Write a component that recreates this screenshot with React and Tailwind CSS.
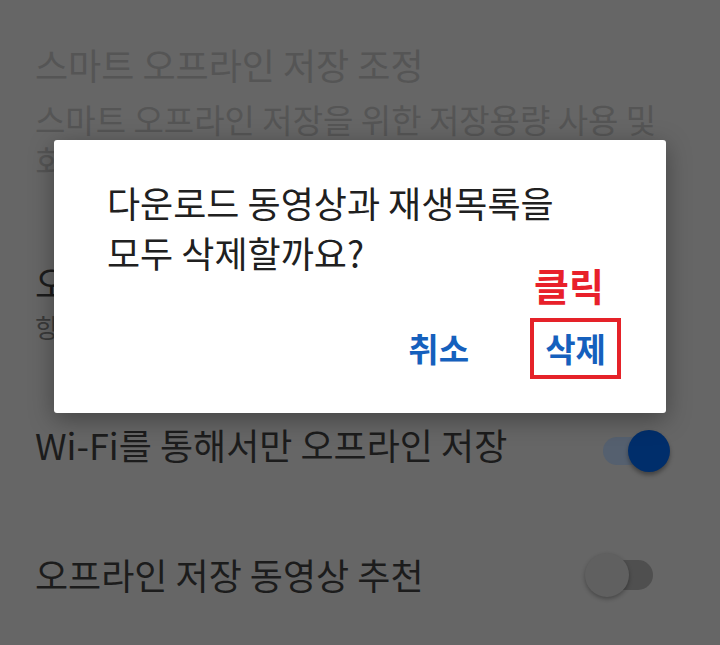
import React from 'react';

const font = { fontFamily: '"Noto Sans CJK KR", "Noto Sans", sans-serif' };

function Toggle({ on }) {
  if (on) {
    return (
      <div className="relative w-[67px] h-[44px] flex items-center">
        <div className="w-[52px] h-[28px] rounded-full bg-[#55606f]" />
        <div className="absolute right-[0px] top-[1px] w-[42px] h-[42px] rounded-full bg-[#002e6b] shadow-[0_3px_4px_rgba(0,0,0,0.35)]" />
      </div>
    );
  }
  return (
    <div className="relative w-[68px] h-[44px] flex items-center justify-end mr-[17px]">
      <div className="w-[48px] h-[30px] rounded-full bg-[#4f4f4f]" />
      <div className="absolute left-[0px] top-[0px] w-[44px] h-[44px] rounded-full bg-[#606060] shadow-[0_2px_4px_rgba(0,0,0,0.3)]" />
    </div>
  );
}

export default function App() {
  return (
    <div className="relative w-[720px] h-[645px] overflow-hidden bg-[#666666]" style={font}>
      <div className="pl-[35px] pr-[50px] pt-[40px]">
        <div className="text-[36px] leading-[48px] text-[#555555] whitespace-nowrap">스마트 오프라인 저장 조정</div>
        <div className="mt-[10px] text-[33px] leading-[42px] text-[#555555] whitespace-nowrap">
          스마트 오프라인 저장을 위한 저장용량 사용 및
          <br />
          회수를 조정합니다
        </div>

        <div className="mt-[76px] text-[36px] leading-[48px] text-[#1c1c1c] whitespace-nowrap">오프라인 저장 화질</div>
        <div className="mt-[2px] text-[26px] leading-[38px] text-[#3a3a3a] whitespace-nowrap">항상 묻기</div>

        <div className="mt-[74px] flex items-start justify-between">
          <div className="text-[36px] leading-[48px] text-[#1c1c1c] whitespace-nowrap">Wi-Fi를 통해서만 오프라인 저장</div>
          <div className="mt-[9px]">
            <Toggle on />
          </div>
        </div>

        <div className="mt-[77px] flex items-start justify-between">
          <div className="text-[36px] leading-[48px] text-[#1c1c1c] whitespace-nowrap">오프라인 저장 동영상 추천</div>
          <div className="mt-[3px]">
            <Toggle />
          </div>
        </div>
      </div>

      <div className="absolute left-[54px] top-[140px] w-[612px] h-[273px] bg-white rounded-[3px] shadow-[0_6px_24px_rgba(0,0,0,0.35)] flex flex-col">
        <div className="pl-[53px] pt-[37px] text-[36px] leading-[50px] text-[#202020] whitespace-nowrap">
          다운로드 동영상과 재생목록을
          <br />
          모두 삭제할까요?
        </div>
        <div className="mt-[41px] pr-[45px] flex justify-end items-center gap-[61px]">
          <button className="text-[33px] font-bold text-[#1560bd] leading-none">취소</button>
          <div className="relative">
            <div className="absolute -top-[52px] left-[4px] text-[38px] font-bold text-[#e8202a] leading-none whitespace-nowrap">클릭</div>
            <button className="w-[91px] h-[61px] border-[4px] border-[#e52229] flex items-center justify-center text-[33px] font-bold text-[#1560bd] leading-none">
              삭제
            </button>
          </div>
        </div>
      </div>
    </div>
  );
}
